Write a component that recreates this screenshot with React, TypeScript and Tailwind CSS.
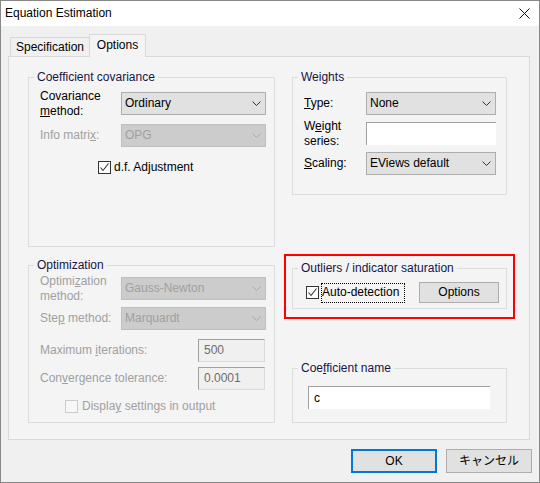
import React from 'react'

const PANEL = 'bg-[#f4f4f4]'

function Chevron({ disabled }: { disabled?: boolean }) {
  return (
    <svg width="9" height="5" viewBox="0 0 9 5" className="shrink-0">
      <polyline points="0.5,0.5 4.5,4.5 8.5,0.5" fill="none" stroke={disabled ? '#a8a8a8' : '#333333'} strokeWidth="1" />
    </svg>
  )
}

function Combo({ value, disabled, className }: { value: string; disabled?: boolean; className: string }) {
  return (
    <div
      className={`flex h-[23px] items-center justify-between border pl-[3px] pr-[4px] ${
        disabled ? 'border-[#bfbfbf] bg-[#cccccc] text-[#a0a0a0]' : 'border-[#adadad] bg-[#e1e1e1] text-black'
      } ${className}`}
    >
      <span>{value}</span>
      <Chevron disabled={disabled} />
    </div>
  )
}

function TextBox({ value, disabled, className }: { value: string; disabled?: boolean; className: string }) {
  return (
    <div
      className={`flex h-[23px] items-center border-t border-l border-t-[#a0a0a0] border-l-[#a0a0a0] pl-[5px] ${
        disabled ? 'border-r border-b border-r-[#dadada] border-b-[#dadada] bg-[#f0f0f0] text-[#6d6d6d]' : 'bg-white text-black'
      } ${className}`}
    >
      {value}
    </div>
  )
}

function CheckBox({ checked, disabled }: { checked?: boolean; disabled?: boolean }) {
  return (
    <div
      className={`flex h-[13px] w-[13px] shrink-0 items-center justify-center border ${
        disabled ? 'border-[#cccccc] bg-[#f7f7f7]' : 'border-[#333333] bg-white'
      }`}
    >
      {checked && (
        <svg width="11" height="11" viewBox="0 0 11 11">
          <polyline points="1.5,5.5 4,8.5 9.5,1.5" fill="none" stroke="#333333" strokeWidth="1.1" />
        </svg>
      )}
    </div>
  )
}

function Group({ title, className, children }: { title: React.ReactNode; className: string; children?: React.ReactNode }) {
  return (
    <div className={`flex flex-col border border-[#dcdcdc] ${className}`}>
      <div className={`-mt-[8px] ml-[5px] w-fit px-[3px] leading-[15px] text-[#15154a] ${PANEL}`}>{title}</div>
      {children}
    </div>
  )
}

const App: React.FC = () => {
  return (
    <div className="flex h-[483px] w-[540px] flex-col border border-[#888888] bg-[#f0f0f0] font-['Liberation_Sans','Noto_Sans_CJK_JP',sans-serif] text-[12px] leading-[15px] text-black">
      {/* Title bar */}
      <div className="flex h-[25px] items-center justify-between bg-white pl-[4px] pr-[9px]">
        <span>Equation Estimation</span>
        <svg width="11" height="11" viewBox="0 0 11 11">
          <path d="M0.5 0.5 L10.5 10.5 M10.5 0.5 L0.5 10.5" stroke="#111" strokeWidth="1" />
        </svg>
      </div>

      {/* Tabs */}
      <div className="-mb-px mt-[8px] flex h-[23px] items-end pl-[9px]">
        <div className="mb-px flex h-[19px] w-[79px] items-center justify-center border-t border-l border-[#d9d9d9]">
          Specification
        </div>
        <div className={`relative z-10 flex h-[23px] w-[57px] items-center justify-center border-t border-l border-r border-[#d9d9d9] pb-[2px] ${PANEL}`}>
          Options
        </div>
      </div>

      {/* Tab panel */}
      <div className={`ml-[7px] flex h-[384px] w-[522px] gap-[17px] border border-[#d9d9d9] pt-[20px] pl-[19px] ${PANEL}`}>
        {/* Left column */}
        <div className="flex flex-col">
          <Group title="Coefficient covariance" className="h-[170px] w-[247px]">
            <div className="mt-[7px] flex h-[23px] items-center pl-[11px]">
              <div className="w-[81px]">
                Covariance
                <br />
                <span className="underline">m</span>ethod:
              </div>
              <Combo value="Ordinary" className="w-[145px]" />
            </div>
            <div className="mt-[9px] flex h-[23px] items-center pl-[11px]">
              <div className="w-[81px] text-[#a0a0a0]">
                Info matri<span className="underline">x</span>:
              </div>
              <Combo value="OPG" disabled className="w-[145px]" />
            </div>
            <div className="mt-[14px] flex h-[13px] items-center pl-[69px]">
              <CheckBox checked />
              <span className="ml-[3px]">d.f. Adjustment</span>
            </div>
          </Group>

          <Group title="Optimization" className="mt-[18px] h-[158px] w-[247px]">
            <div className="mt-[4px] flex h-[23px] items-center pl-[11px] text-[#a0a0a0]">
              <div className="w-[81px]">
                Optimi<span className="underline">z</span>ation
                <br />
                method:
              </div>
              <Combo value="Gauss-Newton" disabled className="w-[145px]" />
            </div>
            <div className="mt-[7px] flex h-[23px] items-center pl-[11px] text-[#a0a0a0]">
              <div className="w-[81px]">
                Ste<span className="underline">p</span> method:
              </div>
              <Combo value="Marquardt" disabled className="w-[145px]" />
            </div>
            <div className="mt-[9px] flex h-[23px] items-center pl-[11px] text-[#a0a0a0]">
              <div className="w-[158px]">
                Maximum <span className="underline">i</span>terations:
              </div>
              <TextBox value="500" disabled className="w-[67px]" />
            </div>
            <div className="mt-[5px] flex h-[23px] items-center pl-[11px] text-[#a0a0a0]">
              <div className="w-[158px]">
                Con<span className="underline">v</span>ergence tolerance:
              </div>
              <TextBox value="0.0001" disabled className="w-[67px]" />
            </div>
            <div className="mt-[10px] flex h-[13px] items-center pl-[36px] text-[#a0a0a0]">
              <CheckBox disabled />
              <span className="ml-[4px]">
                Displa<span className="underline">y</span> settings in output
              </span>
            </div>
          </Group>
        </div>

        {/* Right column */}
        <div className="flex flex-col">
          <Group title="Weights" className="h-[118px] w-[215px]">
            <div className="mt-[7px] flex h-[23px] items-center pl-[11px]">
              <div className="w-[62px]">
                <span className="underline">T</span>ype:
              </div>
              <Combo value="None" className="w-[130px]" />
            </div>
            <div className="mt-[7px] flex h-[23px] items-center pl-[11px]">
              <div className="w-[62px]">
                W<span className="underline">e</span>ight
                <br />
                series:
              </div>
              <TextBox value="" className="w-[130px]" />
            </div>
            <div className="mt-[7px] flex h-[23px] items-center pl-[11px]">
              <div className="w-[62px]">
                <span className="underline">S</span>caling:
              </div>
              <Combo value="EViews default" className="w-[130px]" />
            </div>
          </Group>

          <div className="-ml-[8px] mt-[59px] w-[231px] border-2 border-[#ff0000] pt-[12px] pb-[8px] pl-[6px]">
            <Group title="Outliers / indicator saturation" className="h-[41px] w-[215px]">
              <div className="mt-[6px] flex h-[21px] items-center pl-[13px] pr-[7px]">
                <CheckBox checked />
                <div className="ml-[2px] flex h-[20px] w-[84px] items-center border border-dotted border-black pl-[0px]">
                  Auto-detection
                </div>
                <div className="ml-auto flex h-[21px] w-[80px] items-center justify-center border border-[#adadad] bg-[#e1e1e1]">
                  Options
                </div>
              </div>
            </Group>
          </div>

          <Group
            title={
              <span>
                Coe<span className="underline">f</span>ficient name
              </span>
            }
            className="mt-[49px] h-[55px] w-[215px]"
          >
            <div className="mt-[10px] pl-[15px]">
              <TextBox value="c" className="w-[182px]" />
            </div>
          </Group>
        </div>
      </div>

      {/* Buttons */}
      <div className="mt-[9px] flex justify-end gap-[9px] pr-[7px]">
        <div className="flex h-[24px] w-[86px] items-center justify-center border-2 border-[#0078d7] bg-[#e1e1e1]">OK</div>
        <div className="flex h-[24px] w-[86px] items-center justify-center border border-[#adadad] bg-[#e1e1e1]">キャンセル</div>
      </div>
    </div>
  )
}

export default App
